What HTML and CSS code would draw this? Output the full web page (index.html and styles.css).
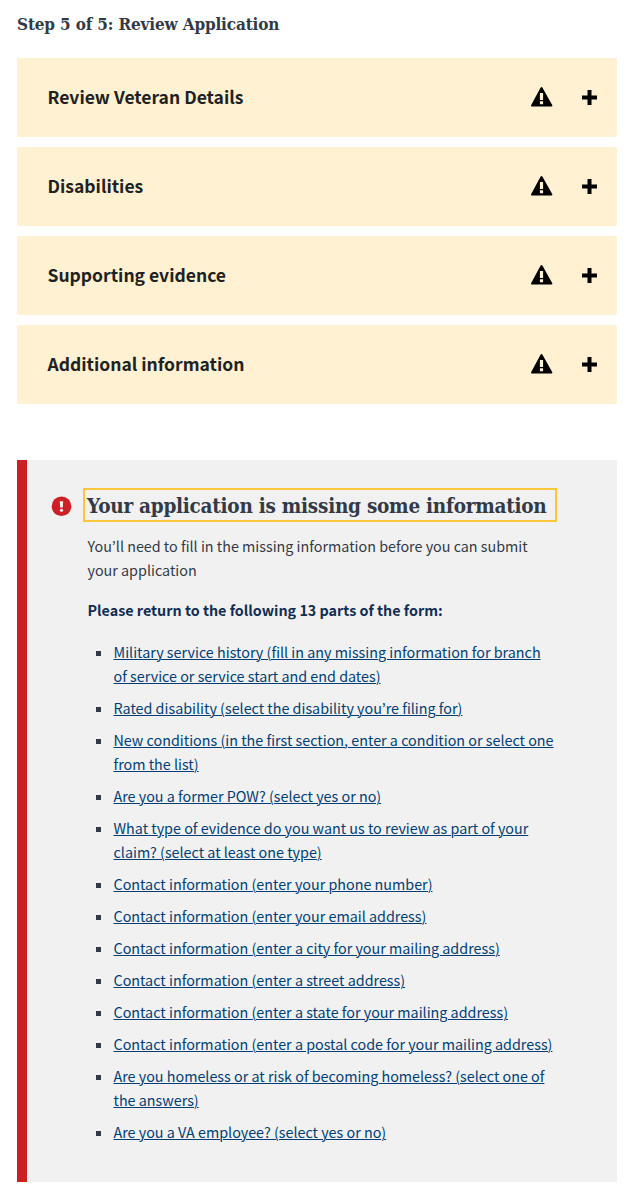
FILE: index.html
```html
<!DOCTYPE html>
<html lang="en">
<head>
<meta charset="utf-8">
<title>Review Application</title>
<link rel="stylesheet" href="styles.css">
</head>
<body>
<svg width="0" height="0" class="defs" aria-hidden="true">
  <symbol id="warning" viewBox="0 0 22 20"><path fill-rule="evenodd" d="M10.500 0Q11 0 11.500.8L21.300 18.200Q21.600 19.400 20.500 19.500H.7Q-.3 19.400.1 18.200L9.500.8Q10 0 10.500 0ZM8.900 6v7h3.200V6ZM8.900 14.200v3h3.200v-3Z"/></symbol>
  <symbol id="plus" viewBox="0 0 15 15"><path d="M5.500 0h4v5.500H15v4H9.500V15h-4V9.500H0v-4h5.500Z"/></symbol>
</svg>
<main class="page">
  <h1 class="step">Step 5 of 5: Review Application</h1>
  <div class="accordion">
    <button class="panel"><span class="panel-title">Review Veteran Details</span><svg class="warning"><use href="#warning"/></svg><svg class="plus"><use href="#plus"/></svg></button>
    <button class="panel"><span class="panel-title">Disabilities</span><svg class="warning"><use href="#warning"/></svg><svg class="plus"><use href="#plus"/></svg></button>
    <button class="panel"><span class="panel-title">Supporting evidence</span><svg class="warning"><use href="#warning"/></svg><svg class="plus"><use href="#plus"/></svg></button>
    <button class="panel"><span class="panel-title">Additional information</span><svg class="warning"><use href="#warning"/></svg><svg class="plus"><use href="#plus"/></svg></button>
  </div>
  <section class="alert">
    <svg class="alert-icon" viewBox="0 0 20 20"><circle cx="10.500" cy="10.300" r="9.800" fill="#cd2026"/><path fill="#f1f1f1" d="M8.800 5.200h3.400l-.4 6.200H9.200Z"/><circle cx="10.500" cy="14.300" r="1.600" fill="#f1f1f1"/></svg>
    <div class="alert-body">
      <h2 class="alert-title">Your application is missing some information</h2>
      <p class="text">You’ll need to fill in the missing information before you can submit<br>your application</p>
      <p class="lead">Please return to the following 13 parts of the form:</p>
      <ul class="links">
        <li><a href="#">Military service history (fill in any missing information for branch<br>of service or service start and end dates)</a></li>
        <li><a href="#">Rated disability (select the disability you’re filing for)</a></li>
        <li><a href="#">New conditions (in the first section, enter a condition or select one<br>from the list)</a></li>
        <li><a href="#">Are you a former POW? (select yes or no)</a></li>
        <li><a href="#">What type of evidence do you want us to review as part of your<br>claim? (select at least one type)</a></li>
        <li><a href="#">Contact information (enter your phone number)</a></li>
        <li><a href="#">Contact information (enter your email address)</a></li>
        <li><a href="#">Contact information (enter a city for your mailing address)</a></li>
        <li><a href="#">Contact information (enter a street address)</a></li>
        <li><a href="#">Contact information (enter a state for your mailing address)</a></li>
        <li><a href="#">Contact information (enter a postal code for your mailing address)</a></li>
        <li><a href="#">Are you homeless or at risk of becoming homeless? (select one of<br>the answers)</a></li>
        <li><a href="#">Are you a VA employee? (select yes or no)</a></li>
      </ul>
    </div>
  </section>
</main>
</body>
</html>
```
FILE: styles.css
```css
* { box-sizing: border-box; }
body {
  margin: 0;
  background: #fff;
  color: #323a45;
  font: 14.33px/24px "Noto Sans CJK JP", "Noto Sans", sans-serif;
}
.defs { display: block; }
.page { padding: 12px 24px 18px 17px; }
h1, h2, p, ul { margin: 0; padding: 0; }
.step {
  font: bold 17px/24px "DejaVu Serif Condensed", "DejaVu Serif", serif;
  letter-spacing: -0.16px;
  white-space: nowrap;
}
.accordion { display: flex; flex-direction: column; gap: 10px; margin-top: 22px; }
.panel {
  display: flex;
  align-items: center;
  width: 100%;
  height: 79px;
  padding: 0 20px 0 30.500px;
  border: 0;
  border-radius: 2px;
  background: #fff1d2;
  color: #212121;
  font: bold 17.500px/26px "Noto Sans CJK JP", "Noto Sans", sans-serif;
  text-align: left;
}
.panel-title { flex: 1; padding-bottom: 2px; white-space: nowrap; }
.warning { width: 22px; height: 20px; margin: 0 29px 2px 0; fill: #000; }
.plus { width: 15px; height: 15px; fill: #000; }
.alert {
  display: flex;
  height: 722px;
  margin-top: 56px;
  padding: 28px 20px 0 24px;
  border-left: 10px solid #cd2026;
  background: #f1f1f1;
}
.alert-icon { flex: none; width: 20px; height: 20px; margin: 8px 16px 0 0; overflow: visible; }
.alert-body { white-space: nowrap; margin-left: -4px; }
.alert-title {
  width: 474px;
  height: 34px;
  padding: 1px 0 0 2px;
  border: 2px solid #fdc53a;
  font: bold 20.500px/30px "DejaVu Serif Condensed", "DejaVu Serif", serif;
  letter-spacing: -0.24px;
}
.text { margin: 12px 0 16px 4.500px; }
.lead { margin: 0 0 18px 4.500px; color: #112e51; font-weight: bold; }
.links { display: flex; flex-direction: column; gap: 8px; margin-left: 30.500px; list-style: none; }
.links li { display: flex; }
.links li::before {
  content: "";
  flex: none;
  width: 5px;
  height: 5px;
  margin: 11px 12.500px 0 -17.500px;
  background: #323a45;
}
.links a {
  color: #003e73;
  text-decoration: underline;
  text-decoration-thickness: 1px;
  text-underline-offset: 1px;
  text-decoration-skip-ink: auto;
}
```
